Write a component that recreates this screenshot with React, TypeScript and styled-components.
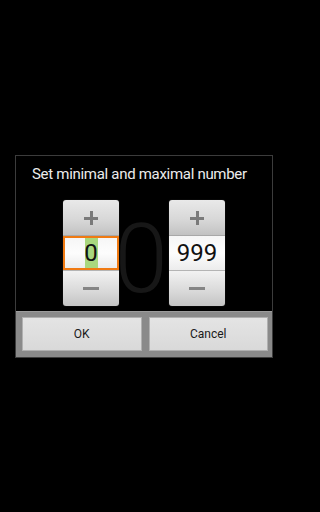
import React, { FC } from 'react'
import styled, { createGlobalStyle } from 'styled-components'

const GlobalStyle = createGlobalStyle`
  html, body {
    margin: 0;
    padding: 0;
    background: #000;
    width: 288px;
    height: 512px;
    overflow: hidden;
    font-family: Roboto, "Noto Sans", sans-serif;
  }
`

const Picker: FC<{ value: string; focused?: boolean }> = ({ value, focused }) => (
  <PickerWrapper>
    <PickerButton>
      <PlusSign />
    </PickerButton>
    <PickerValue $focused={focused}>
      {focused ? <Selected>{value}</Selected> : value}
    </PickerValue>
    <PickerButton $bottom>
      <MinusSign />
    </PickerButton>
  </PickerWrapper>
)

const App: FC = () => (
  <>
    <GlobalStyle />
    <Screen>
      <Dialog>
        <Title>Set minimal and maximal number</Title>
        <PickerRow>
          <GhostDigit>0</GhostDigit>
          <Picker value='0' focused />
          <Picker value='999' />
        </PickerRow>
        <ButtonBar>
          <DialogButton>OK</DialogButton>
          <DialogButton>Cancel</DialogButton>
        </ButtonBar>
      </Dialog>
    </Screen>
  </>
)

const Screen = styled.div`
  width: 288px;
  height: 512px;
  padding-top: 155px;
  box-sizing: border-box;
`

const Dialog = styled.div`
  margin-left: 15px;
  width: 258px;
  border: 1px solid #3c3c3c;
  background: #000;
  box-sizing: border-box;
`

const Title = styled.div`
  color: #ececec;
  font-size: 15px;
  letter-spacing: -0.3px;
  line-height: 20px;
  padding: 8px 0 0 16px;
  height: 44px;
  box-sizing: border-box;
  white-space: nowrap;
`

const PickerRow = styled.div`
  position: relative;
  display: flex;
  justify-content: center;
  gap: 50px;
  height: 111px;
`

const GhostDigit = styled.div`
  position: absolute;
  left: 0;
  right: 0;
  top: 4px;
  text-align: center;
  font-size: 96px;
  font-weight: 300;
  line-height: 110px;
  color: #171717;
  margin-left: -6px;
  pointer-events: none;
`

const PickerWrapper = styled.div`
  position: relative;
  width: 56px;
  height: 106px;
  display: flex;
  flex-direction: column;
  border-radius: 3px;
  overflow: hidden;
  box-shadow: 0 0 1px rgba(255, 255, 255, 0.3);
`

const PickerButton = styled.div<{ $bottom?: boolean }>`
  flex: 0 0 35px;
  display: flex;
  align-items: center;
  justify-content: center;
  background: ${({ $bottom }) => $bottom
    ? 'linear-gradient(#f2f2f2, #d8d8d8 60%, #c4c4c4)'
    : 'linear-gradient(#e9e9e9, #d6d6d6 60%, #c2c2c2)'};
  border-top: ${({ $bottom }) => $bottom ? '1px solid #b4b4b4' : 'none'};
  border-bottom: ${({ $bottom }) => $bottom ? 'none' : '1px solid #a8a8a8'};
`

const PlusSign = styled.div`
  position: relative;
  width: 14px;
  height: 14px;

  &::before, &::after {
    content: '';
    position: absolute;
    background: #7a7a7a;
  }
  &::before {
    left: 0;
    right: 0;
    top: 6px;
    height: 3px;
  }
  &::after {
    top: 0;
    bottom: 0;
    left: 6px;
    width: 3px;
  }
`

const MinusSign = styled.div`
  width: 16px;
  height: 3px;
  background: #858585;
`

const PickerValue = styled.div<{ $focused?: boolean }>`
  flex: 1;
  display: flex;
  align-items: center;
  justify-content: center;
  background: linear-gradient(#f6f6f6, #fdfdfd 50%, #ececec);
  color: #111;
  font-size: 24px;
  box-sizing: border-box;
  border: ${({ $focused }) => $focused ? '2px solid #f07a12' : 'none'};
`

const Selected = styled.span`
  display: flex;
  align-items: center;
  justify-content: center;
  height: 100%;
  width: 13px;
  background: #a9d77e;
`

const ButtonBar = styled.div`
  display: flex;
  gap: 7px;
  padding: 5px 4px 6px 6px;
  background: #8a8a8a;
  border-top: 1px solid #9c9c9c;
`

const DialogButton = styled.div`
  flex: 1;
  height: 34px;
  display: flex;
  align-items: center;
  justify-content: center;
  background: linear-gradient(#e4e4e4, #d9d9d9);
  border: 1px solid #b0b0b0;
  box-sizing: border-box;
  color: #1a1a1a;
  font-size: 12px;
`

export default App
